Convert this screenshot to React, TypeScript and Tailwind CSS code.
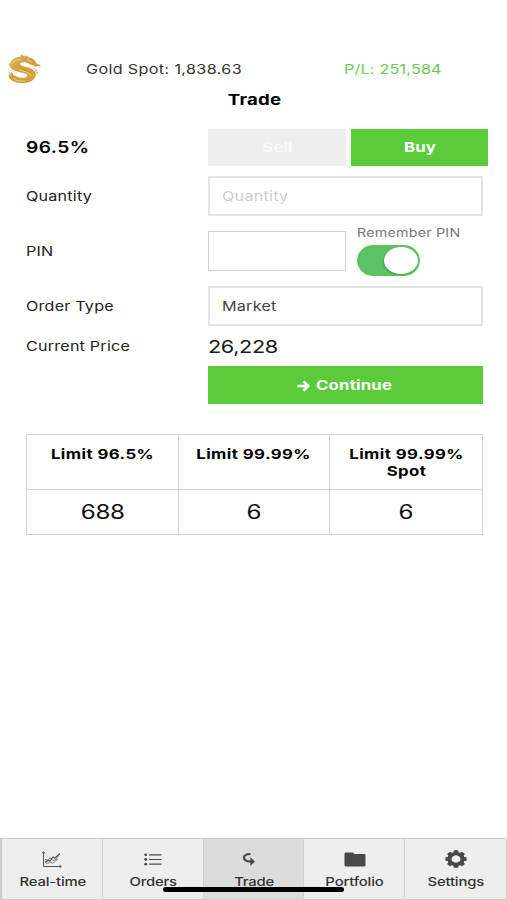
import React from "react";

type TextProps = { children: React.ReactNode; className?: string };

// Wide lettering used for every label on the screen.
function Wide({ children, className = "" }: TextProps) {
  return (
    <span className={`inline-block scale-x-[1.24] whitespace-nowrap ${className}`}>{children}</span>
  );
}

function DragonLogo() {
  return (
    <svg viewBox="0 0 34 32" className="h-8 w-[34px]" fill="none">
      <defs>
        <linearGradient id="gold" x1="0" y1="0" x2="1" y2="1">
          <stop offset="0" stopColor="#dcb863" />
          <stop offset="0.5" stopColor="#cd9d37" />
          <stop offset="1" stopColor="#d6a640" />
        </linearGradient>
      </defs>
      <path
        fill="url(#gold)"
        d="M14 3.500L13 1l4.500 2.200L20 2.400l1.500 1.800 4 1.300 2.500 2.500 2 3 3.200.8.300 1.900-2.800-.6-2.200 1-2-2-3-.3-3.500-2c-3.500-1-6.500-.4-7 1 0 1.700 3 2.500 7 3.500 5.500 1.400 8.800 3.700 8.800 7.200 0 5-6 8.500-12.500 8.700C9.500 30.500 4 28 2 24.500L1.300 21l2 1.700L1 18l3 3 .5-2.500 2 3.500 4 2c5 1.600 9.500.8 10-1.200.2-1.800-3.500-2.700-8-3.800C7 17.800 3 16 2.500 12.500L1.300 10.300l2 .2C4 6.500 8 4 14 3.500z"
      />
      <path d="M5 11c1-3 4-4.500 8-4.500M12 17c6 1.500 11 3 12 6M6 25c3 3 8 3.500 12 2.800M20 6l5 3.500M1 16.500c3 .8 6 2.500 9 3.200" stroke="#f1dda8" strokeWidth=".8" />
      <path d="M26 15c3 .8 4.500 2.500 4.300 5.500M28 17l2.300 4" stroke="#dcbc70" strokeWidth="1" />
    </svg>
  );
}

function ChartIcon() {
  return (
    <svg viewBox="0 0 20 17" className="h-[17px] w-5" fill="none" stroke="#555" strokeWidth="1">
      <path d="M1.500 1v14.500H19M0 2.500L1.500.700 3 2.500M17.500 14l1.800 1.500-1.800 1.300" />
      <path d="M3 11.500l3-2 2 .5 3-4 2 1 5-4.500" strokeWidth="1.200" />
      <path d="M3 8.500l3 .5 2-2.500 3 3 3-1 2.500-4M4 12.500l4-1 3 .5 5-4" strokeWidth=".7" />
    </svg>
  );
}

function ListIcon() {
  return (
    <svg viewBox="0 0 18 13" className="h-[13px] w-[18px]" fill="#484848">
      <circle cx="1.700" cy="1.800" r="1.400" />
      <circle cx="1.700" cy="6.500" r="1.400" />
      <circle cx="1.700" cy="11.200" r="1.400" />
      <path d="M5 1.200h12.500v1.200H5zM5 5.900h12.500v1.200H5zM5 10.600h12.500v1.200H5z" />
    </svg>
  );
}

function TradeIcon() {
  return (
    <svg viewBox="0 0 14 14" className="mr-2 h-3.5 w-3.5" fill="none">
      <path d="M8.500 2C4.500 1.900 2 3.200 2 5.600s2.500 4 7 4" stroke="#484848" strokeWidth="2.200" />
      <path d="M8.300 5.200L13 9.600l-4.700 4.300z" fill="#484848" />
    </svg>
  );
}

function FolderIcon() {
  return (
    <svg viewBox="0 0 22 15" className="ml-0.5 h-[15px] w-[22px]" fill="#484848">
      <path d="M2 .5h6.500c1 0 1.500.6 1.500 1.500h10c1 0 1.500.6 1.500 1.500v9.500c0 .9-.6 1.500-1.500 1.500H2c-1 0-1.500-.6-1.500-1.500V2C.5 1.100 1 .5 2 .5z" />
    </svg>
  );
}

const teeth = [0, 45, 90, 135, 180, 225, 270, 315];

function GearIcon() {
  return (
    <svg viewBox="0 0 20 20" preserveAspectRatio="none" className="h-[18px] w-[22px]">
      <circle cx="10" cy="10" r="6" fill="none" stroke="#484848" strokeWidth="3.800" />
      {teeth.map((a) => (
        <path key={a} d="M7.600 3.500L8.100.4h3.800l.5 3.100z" fill="#484848" transform={`rotate(${a} 10 10)`} />
      ))}
    </svg>
  );
}

const tabs = [
  { label: "Real-time", icon: <ChartIcon /> },
  { label: "Orders", icon: <ListIcon /> },
  { label: "Trade", icon: <TradeIcon />, active: true },
  { label: "Portfolio", icon: <FolderIcon /> },
  { label: "Settings", icon: <GearIcon /> },
];

const limits = [
  { label: "Limit 96.5%", value: "688" },
  { label: "Limit 99.99%", value: "6" },
  { label: "Limit 99.99% Spot", value: "6" },
];

function RowLabel({ children }: { children: React.ReactNode }) {
  return (
    <div className="w-[182px] shrink-0 text-[13px] text-[#222]">
      <Wide className="origin-left tracking-[0.17px]">{children}</Wide>
    </div>
  );
}

export default function App() {
  return (
    <div className="flex h-[900px] w-[507px] flex-col overflow-hidden bg-white font-['Inter',sans-serif] leading-none">
      <header className="mt-[53px] flex h-8 items-center pl-[7px] text-[13px]">
        <DragonLogo />
        <div className="ml-[45px] w-[258px] text-[#333]">
          <Wide className="origin-left tracking-[0.3px]">Gold Spot: 1,838.63</Wide>
        </div>
        <div className="text-[#67cc52]">
          <Wide className="origin-left tracking-[0.17px]">P/L: 251,584</Wide>
        </div>
      </header>
      <h1 className="mt-1.5 flex h-4 items-center justify-center pl-0.5 text-[15px] font-bold text-black">
        <Wide className="tracking-[0.2px]">Trade</Wide>
      </h1>

      <main className="flex flex-col pl-[26px]">
        <div className="mt-[22px] flex h-[37px] items-center">
          <div className="w-[182px] pt-px text-[15.500px] font-semibold text-black">
            <Wide className="origin-left tracking-[0.35px]">96.5%</Wide>
          </div>
          <button className="h-full w-[138px] bg-[#eee] pt-px text-[13.500px] font-bold text-[#fafafa]">
            <Wide className="tracking-[0.15px]">Sell</Wide>
          </button>
          <button className="ml-[5px] h-full w-[137px] bg-[#5bca3b] pt-px text-[13.500px] font-bold text-white">
            <Wide className="tracking-[0.15px]">Buy</Wide>
          </button>
        </div>

        <div className="mt-2.5 flex h-10 items-center">
          <RowLabel>Quantity</RowLabel>
          <div className="flex h-full w-[275px] items-center border-2 border-[#e4e4e4] pl-3 text-[13px] text-[#ccc]">
            <Wide className="origin-left tracking-[0.22px]">Quantity</Wide>
          </div>
        </div>

        <div className="mt-[11px] flex h-[52px] items-start">
          <div className="flex h-[48px] items-center">
            <RowLabel>PIN</RowLabel>
          </div>
          <div className="mt-1 h-10 w-[138px] border border-[#d0d0d0]" />
          <div className="ml-[11px] flex h-full flex-col">
            <div className="flex h-3.5 items-center text-[11.500px] text-[#777]">
              <Wide className="origin-left tracking-[0.18px]">Remember PIN</Wide>
            </div>
            <div className="mt-1 flex h-[31px] w-[63px] shrink-0 items-center justify-end rounded-full border border-[#5cc850] bg-[#5cc266] pr-px">
              <div className="h-[27px] w-[34px] rounded-[50%] bg-white shadow-[-1px_1px_2px_rgba(0,0,0,0.2)]" />
            </div>
          </div>
        </div>

        <div className="mt-[7px] flex h-10 items-center">
          <RowLabel>Order Type</RowLabel>
          <div className="flex h-full w-[275px] items-center border-2 border-[#e4e4e4] pl-3 text-[13px] text-[#444]">
            <Wide className="origin-left tracking-[0.2px]">Market</Wide>
          </div>
        </div>

        <div className="flex h-10 items-center">
          <RowLabel>Current Price</RowLabel>
          <div className="pt-0.5 text-[17.500px] text-[#1a1a1a]">
            <Wide className="origin-left tracking-[-0.3px]">26,228</Wide>
          </div>
        </div>

        <button className="ml-[182px] flex h-[38px] w-[275px] items-center bg-[#5bca3b] pt-px pl-[89px] text-[13.500px] font-bold text-white">
          <svg viewBox="0 0 13 12" className="mr-[6px] h-3 w-[13px]" fill="none" stroke="white" strokeWidth="2.600">
            <path d="M.3 6h11M6.300 1.300L11.300 6l-5 4.700" />
          </svg>
          <Wide className="origin-left tracking-[0.15px]">Continue</Wide>
        </button>

        <div className="mt-[30px] grid h-[101px] w-[457px] grid-cols-3 grid-rows-[55px_44px] border border-[#d3d3d3]">
          {limits.map((l, i) => (
            <div
              key={l.label}
              className={`flex justify-center border-b border-[#d3d3d3] pt-[11px] text-center text-[13.500px] leading-[17px] font-bold text-black ${i < 2 ? "border-r" : ""}`}
            >
              <span className="inline-block w-[105px] scale-x-[1.24] tracking-[0.35px]">{l.label}</span>
            </div>
          ))}
          {limits.map((l, i) => (
            <div
              key={l.label}
              className={`flex items-center justify-center border-[#d3d3d3] pt-px text-[19.500px] text-[#111] ${i < 2 ? "border-r" : ""}`}
            >
              <Wide className="tracking-[-0.25px]">{l.value}</Wide>
            </div>
          ))}
        </div>
      </main>

      <nav className="relative mt-auto grid h-[62px] grid-cols-5 border border-l-2 border-[#ccc] text-[12px] font-medium text-[#333]">
        {tabs.map((t, i) => (
          <div
            key={t.label}
            className={`flex flex-col items-center border-[#d0d0d0] ${i < 4 ? "border-r" : ""} ${t.active ? "bg-[#dcdcdc]" : "bg-[#eee]"}`}
          >
            <div className="mt-2.5 flex h-5 items-center">{t.icon}</div>
            <Wide className="mt-[7px] ml-px tracking-[-0.15px]">{t.label}</Wide>
          </div>
        ))}
        <div className="absolute top-[48px] left-[161px] h-[5px] w-[181px] rounded-full bg-black" />
      </nav>
    </div>
  );
}
